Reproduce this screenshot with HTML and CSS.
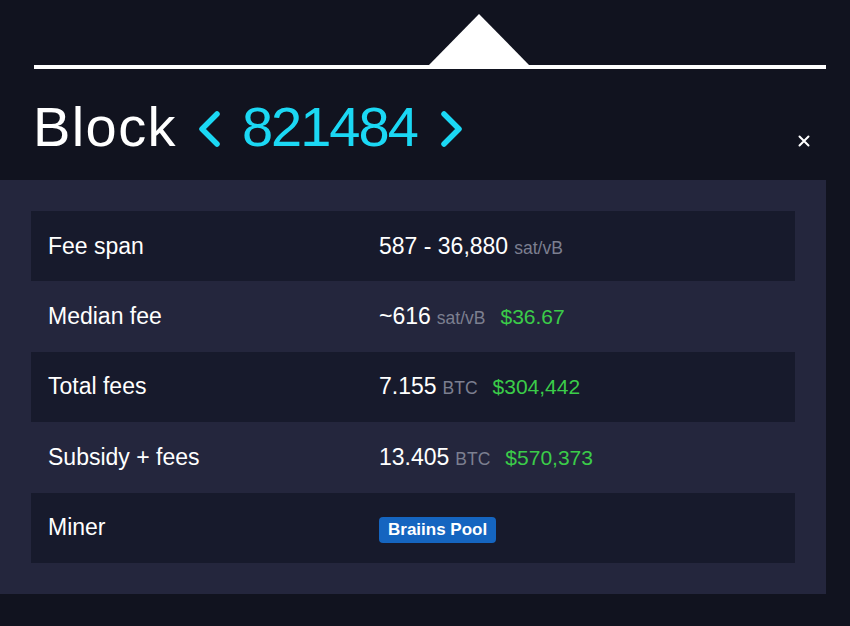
FILE: index.html
```html
<!DOCTYPE html>
<html>
<head>
<meta charset="utf-8">
<link rel="stylesheet" href="styles.css">
</head>
<body>
<div class="top">
  <div class="track">
    <div class="pointer"></div>
  </div>
</div>
<div class="header">
  <h1 class="title">
    <span class="word">Block</span>
    <svg class="chev" viewBox="0 0 26 38" width="26" height="38"><polyline points="21,4 6,19 21,34" fill="none" stroke="#1bd8f4" stroke-width="5.5" stroke-linecap="round" stroke-linejoin="round"/></svg>
    <span class="height">821484</span>
    <svg class="chev" viewBox="0 0 26 38" width="26" height="38"><polyline points="5,4 20,19 5,34" fill="none" stroke="#1bd8f4" stroke-width="5.5" stroke-linecap="round" stroke-linejoin="round"/></svg>
  </h1>
  <svg class="close" viewBox="0 0 12 12" width="12" height="12"><path d="M1.5 1.5 L10.5 10.5 M10.5 1.5 L1.5 10.5" stroke="#ffffff" stroke-width="2" stroke-linecap="round"/></svg>
</div>
<div class="panel">
  <div class="table">
    <div class="row odd">
      <div class="label">Fee span</div>
      <div class="value">587 - 36,880 <span class="unit">sat/vB</span></div>
    </div>
    <div class="row">
      <div class="label">Median fee</div>
      <div class="value">~616 <span class="unit">sat/vB</span><span class="fiat">$36.67</span></div>
    </div>
    <div class="row odd">
      <div class="label">Total fees</div>
      <div class="value">7.155 <span class="unit">BTC</span><span class="fiat">$304,442</span></div>
    </div>
    <div class="row">
      <div class="label">Subsidy + fees</div>
      <div class="value">13.405 <span class="unit">BTC</span><span class="fiat">$570,373</span></div>
    </div>
    <div class="row odd">
      <div class="label">Miner</div>
      <div class="value"><span class="badge">Braiins Pool</span></div>
    </div>
  </div>
</div>
</body>
</html>
```
FILE: styles.css
```css
html, body {
  margin: 0;
  padding: 0;
  background: #11131f;
  font-family: "Liberation Sans", Arial, sans-serif;
  color: #ffffff;
}
.top {
  height: 69px;
  padding: 0 24px 0 34px;
}
.track {
  position: relative;
  height: 65px;
  border-bottom: 4px solid #ffffff;
}
.pointer {
  position: absolute;
  left: 394px;
  bottom: -1px;
  width: 0;
  height: 0;
  border-left: 51px solid transparent;
  border-right: 51px solid transparent;
  border-bottom: 52px solid #ffffff;
}
.header {
  height: 111px;
  display: flex;
  justify-content: space-between;
  padding: 0 40px 0 33px;
}
.title {
  margin: 24px 0 0 0;
  font-weight: normal;
  font-size: 56px;
  line-height: 67px;
  height: 67px;
  display: flex;
  align-items: center;
}
.word {
  letter-spacing: 1.4px;
  margin-right: 19px;
}
.height {
  color: #1bd8f4;
  letter-spacing: -2px;
  margin: 0 22px 0 20px;
}
.chev {
  display: block;
  margin-top: 4px;
}
.close {
  align-self: flex-end;
  margin-bottom: 33px;
}
.panel {
  width: 764px;
  padding: 31px;
  background: #24263d;
}
.row {
  display: flex;
  align-items: center;
  height: 70.4px;
  font-size: 23px;
}
.row.odd {
  background: #171a2c;
}
.label {
  width: 331px;
  padding-left: 17px;
}
.value {
  display: flex;
  align-items: baseline;
}
.unit {
  color: #7c7f90;
  font-size: 17.5px;
  margin-left: 6px;
}
.fiat {
  color: #3bcc49;
  font-size: 21px;
  margin-left: 15px;
}
.badge {
  display: inline-block;
  background: #1565c0;
  color: #ffffff;
  font-weight: bold;
  font-size: 17px;
  line-height: 26px;
  padding: 0 9px;
  border-radius: 4px;
  margin-top: 4px;
}
```
